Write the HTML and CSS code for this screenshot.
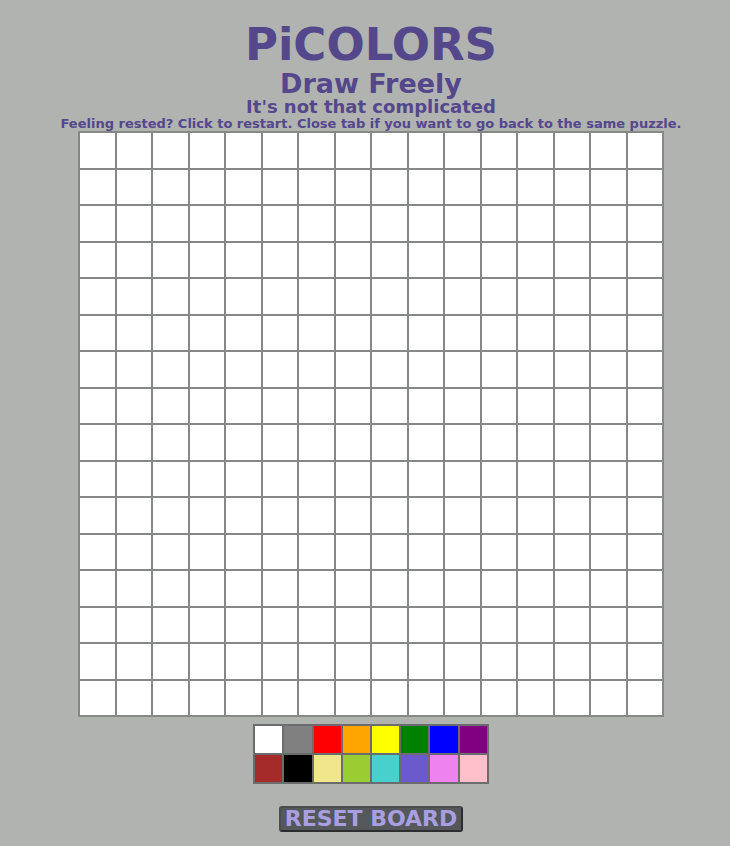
FILE: index.html
```html
<!DOCTYPE html>
<html lang="en">
<head>
<meta charset="utf-8">
<title>PiCOLORS</title>
<link rel="stylesheet" href="styles.css">
</head>
<body>
<main class="app">
  <header class="intro">
    <h1 class="title">PiCOLORS</h1>
    <h2 class="mode">Draw Freely</h2>
    <h3 class="tagline">It's not that complicated</h3>
    <p class="hint">Feeling rested? Click to restart. Close tab if you want to go back to the same puzzle.</p>
  </header>
  <div class="board" id="board"></div>
  <div class="palette" id="palette"></div>
  <button class="reset" id="reset" type="button">RESET BOARD</button>
</main>
<script src="script.js"></script>
</body>
</html>
```
FILE: styles.css
```css
* {
  box-sizing: border-box;
}

body {
  margin: 0;
  background: #b1b3b0;
  color: #54478c;
  font-family: "DejaVu Sans", Verdana, sans-serif;
  font-weight: 700;
}

.app {
  display: flex;
  flex-direction: column;
  align-items: center;
  padding: 20px 0 14px 12px;
}

.intro {
  text-align: center;
  white-space: nowrap;
}

.title,
.mode,
.tagline,
.hint {
  margin: 0;
}

.title {
  font-size: 45px;
  line-height: 50px;
}

.mode {
  font-size: 27px;
  line-height: 28px;
}

.tagline {
  font-size: 18px;
  line-height: 18px;
}

.hint {
  font-size: 13px;
  line-height: 16px;
}

.board {
  display: grid;
  grid-template-columns: repeat(16, 1fr);
  width: 80vw;
  outline: 1px solid #858887;
}

.cell {
  aspect-ratio: 1;
  border: 1px solid #858887;
  background: #fff;
}

.palette {
  display: grid;
  grid-template-columns: repeat(8, 1fr);
  width: 32vw;
  margin-top: 9px;
  outline: 1px solid #6c6c6e;
}

.swatch {
  aspect-ratio: 1;
  padding: 0;
  border: 1px solid #6c6c6e;
}

.reset {
  margin-top: 23px;
  padding: 0 4px;
  border: 2px solid #4a4c4e;
  border-right-color: #2c2d2f;
  border-bottom-color: #2c2d2f;
  border-radius: 3px;
  background: #55585a;
  color: #a99fe0;
  font: inherit;
  font-size: 22px;
  line-height: 22px;
}
```
FILE: script.js
```js
const colors = [
  "white", "gray", "red", "orange", "yellow", "green", "blue", "purple",
  "brown", "black", "khaki", "yellowgreen", "mediumturquoise", "slateblue", "violet", "pink"
];
const board = document.getElementById("board");
const palette = document.getElementById("palette");
let current = "black";

for (let i = 0; i < 256; i++) {
  const cell = document.createElement("div");
  cell.className = "cell";
  cell.addEventListener("click", () => { cell.style.background = current; });
  board.append(cell);
}

for (const color of colors) {
  const swatch = document.createElement("button");
  swatch.type = "button";
  swatch.className = "swatch";
  swatch.style.background = color;
  swatch.setAttribute("aria-label", color);
  swatch.addEventListener("click", () => { current = color; });
  palette.append(swatch);
}

document.getElementById("reset").addEventListener("click", () => {
  for (const cell of board.children) cell.style.background = "";
});
```
